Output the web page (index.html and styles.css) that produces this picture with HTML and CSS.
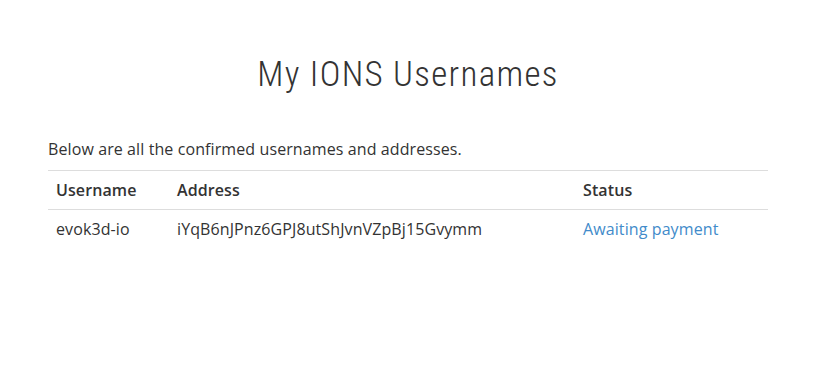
FILE: index.html
```html
<!DOCTYPE html>
<html lang="en">
<head>
  <meta charset="UTF-8">
  <title>My IONS Usernames</title>
  <link rel="stylesheet" href="styles.css">
</head>
<body>
<div class="container">
  <h1>My IONS Usernames</h1>
  <p class="lead">Below are all the confirmed usernames and addresses.</p>
  <table class="names">
    <thead>
      <tr><th class="col-user">Username</th><th class="col-addr">Address</th><th>Status</th></tr>
    </thead>
    <tbody>
      <tr><td>evok3d-io</td><td>iYqB6nJPnz6GPJ8utShJvnVZpBj15Gvymm</td><td><a href="#">Awaiting payment</a></td></tr>
    </tbody>
  </table>
</div>
</body>
</html>
```

FILE: styles.css
```css
body { margin: 0; font-family: "Open Sans", sans-serif; font-size: 16px; letter-spacing: 0.1px; color: #333; background: #fff; }
.container { width: 720px; margin: 0 auto 0 48px; }
h1 { font-family: Roboto, sans-serif; font-stretch: condensed; font-weight: 300; font-size: 35px; letter-spacing: 1.3px; line-height: 40px; text-align: center; margin: 55px 0 44px; color: #333; }
.lead { margin: 0 0 11px; line-height: 20px; }
.names { width: 100%; border-collapse: collapse; }
.names th, .names td { text-align: left; padding: 9px 8px; line-height: 20px; border-top: 1px solid #ddd; }
.names th { font-weight: 600; border-bottom: 1px solid #ddd; }
.names tbody td { border-top: 0; }
.col-user { width: 105px; }
.col-addr { width: 390px; }
a { color: #428bca; text-decoration: none; }
```
